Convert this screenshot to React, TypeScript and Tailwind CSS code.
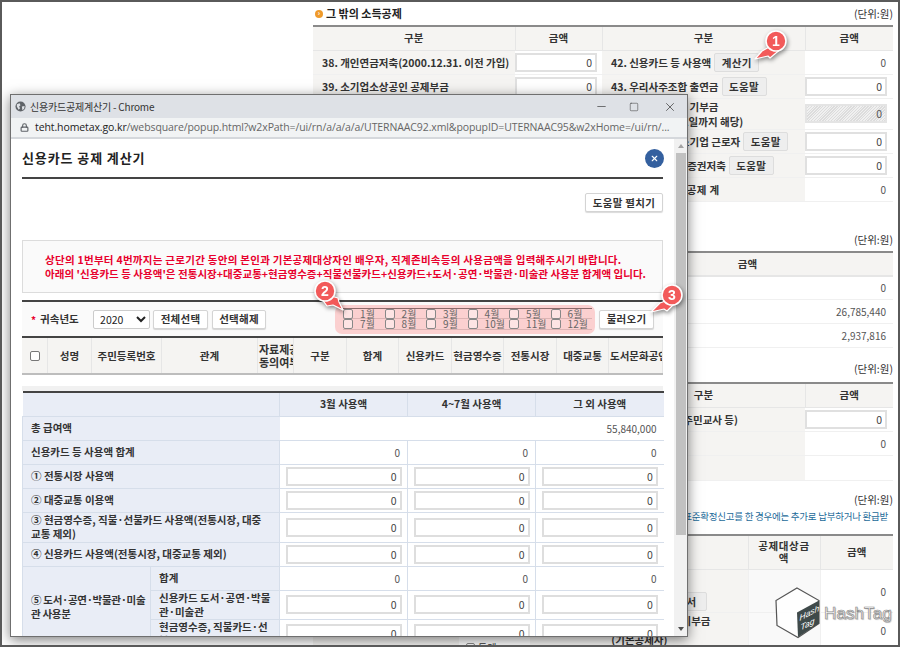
import { Lock, Minus, Square, X } from "lucide-react";

const font = "font-['Noto_Sans_CJK_KR','Noto_Sans',sans-serif]";

const months = ["1월", "2월", "3월", "4월", "5월", "6월", "7월", "8월", "9월", "10월", "11월", "12월"];
const heads = [
  { label: "성명", w: "w-[44px] justify-center" },
  { label: "주민등록번호", w: "w-[70px] justify-center" },
  { label: "관계", w: "w-[96px] justify-center" },
  { label: "자료제공\n동의여부", w: "w-[36px] justify-start pl-[1px] text-[11px]" },
  { label: "구분", w: "w-[53px] justify-center" },
  { label: "합계", w: "w-[52px] justify-center" },
  { label: "신용카드", w: "w-[53px] justify-center" },
  { label: "현금영수증", w: "w-[52px] justify-center" },
  { label: "전통시장", w: "w-[53px] justify-center" },
  { label: "대중교통", w: "w-[52px] justify-center" },
  { label: "도서문화공연", w: "w-[54px] justify-start pl-[1px]" },
];

function Btn({ children, className = "" }: { children: React.ReactNode; className?: string }) {
  return (
    <button className={`h-[19px] rounded-[2px] border border-[#d4d4d4] bg-white text-[10.5px] font-bold tracking-[0.3px] text-[#333] shadow-[0_1px_1px_rgba(0,0,0,0.15)] ${className}`}>
      {children}
    </button>
  );
}

function GrayBtn({ children, className = "" }: { children: React.ReactNode; className?: string }) {
  return (
    <button className={`h-[19px] shrink-0 rounded-[2px] border border-[#ddd] bg-[#eeeeee] text-[10.5px] font-bold tracking-[0.3px] text-[#333] ${className}`}>
      {children}
    </button>
  );
}

function Amount({ className = "w-[82px]" }: { className?: string }) {
  return (
    <input
      readOnly
      value="0"
      className={`h-[19px] border-2 border-[#e0e0e0] bg-white pr-[3px] text-right text-[10.5px] text-[#444] outline-none ${className}`}
    />
  );
}

function Unit({ className = "" }: { className?: string }) {
  return <div className={`flex justify-end text-[10.5px] leading-[14px] text-[#333] ${className}`}>(단위:원)</div>;
}

function BackHead({ children, className = "" }: { children?: React.ReactNode; className?: string }) {
  return (
    <th className={`border-r border-b border-[#e6e6e6] bg-[#f5f4f2] p-0 text-center text-[10.5px] font-bold text-[#333] ${className}`}>
      {children}
    </th>
  );
}

function Label({ children, className = "" }: { children?: React.ReactNode; className?: string }) {
  return (
    <td className={`border-b border-[#f0f0f0] bg-[#f5f4f2] p-0 pl-[9px] text-[10.5px] font-bold leading-[15px] text-[#333] ${className}`}>
      {children}
    </td>
  );
}

function Value({ children, className = "" }: { children?: React.ReactNode; className?: string }) {
  return (
    <td className={`border-b border-[#f0f0f0] p-0 pr-[7px] text-right text-[10px] text-[#555] ${className}`}>
      {children}
    </td>
  );
}

function Marker({ n, className, arrow }: { n: number; className: string; arrow: string }) {
  return (
    <svg viewBox="0 0 44 36" className={`absolute h-[36px] w-[44px] drop-shadow-[1px_2px_2px_rgba(0,0,0,0.45)] ${className}`}>
      <path d={arrow} fill="#f25a5a" stroke="#fff" strokeWidth="1.2" strokeLinejoin="round" />
      <circle cx="22" cy="11" r="10" fill="#f25a5a" stroke="#fff" strokeWidth="1.6" />
      <text x="22" y="16" textAnchor="middle" fontSize="14" fontWeight="700" fill="#fff" fontFamily="Liberation Sans, sans-serif">
        {n}
      </text>
    </svg>
  );
}

function Logo() {
  return (
    <div className="absolute left-[773px] top-[585px] flex items-center">
      <svg viewBox="0 0 46 52" className="h-[52px] w-[46px]">
        <path d="M22 1 44 13.5v23L23 50.5 2 38.5 1 13.5Z" fill="#fff" fillOpacity="0.85" stroke="#555" strokeWidth="1.2" />
        <path d="M22 25.5 44 13.5v23L23 50Z" fill="#3f4a4a" />
        <g transform="matrix(1 -0.52 0 1 24.5 34)" fill="#fff" fontSize="8.5" fontStyle="italic" fontFamily="Liberation Sans, sans-serif">
          <text x="0" y="0">Hash</text>
          <text x="1" y="10">Tag</text>
        </g>
      </svg>
      <span className="ml-[3px] font-['Liberation_Sans',sans-serif] text-[17px] leading-none tracking-[0.1px] text-white [-webkit-text-stroke:0.7px_#8a8a8a] [text-shadow:1px_1px_1px_rgba(0,0,0,0.25)]">
        HashTag
      </span>
    </div>
  );
}

function BackPage() {
  return (
    <div className="ml-[311px] w-[580px]">
      <div className="flex h-[23px] items-center justify-between pl-[2px]">
        <div className="flex items-center gap-[3px] text-[11px] font-bold text-[#222]">
          <span className="flex h-[8px] w-[8px] items-center justify-center rounded-full bg-[#ef9a2a] text-[7px] leading-none text-white">›</span>
          그 밖의 소득공제
        </div>
        <Unit />
      </div>
      <table className="w-[580px] table-fixed border-collapse border-t-2 border-[#8a8a8a]">
        <colgroup>
          <col className="w-[202px]" />
          <col className="w-[87px]" />
          <col className="w-[203px]" />
          <col className="w-[88px]" />
        </colgroup>
        <tbody>
          <tr className="h-[24px]">
            <BackHead>구분</BackHead>
            <BackHead>금액</BackHead>
            <BackHead>구분</BackHead>
            <BackHead className="border-r-0">금액</BackHead>
          </tr>
          <tr className="h-[24px]">
            <Label>38. 개인연금저축(2000.12.31. 이전 가입)</Label>
            <Value className="pr-[1px]"><Amount /></Value>
            <Label>
              <div className="flex items-center gap-[3px]">42. 신용카드 등 사용액<GrayBtn className="w-[45px]">계산기</GrayBtn></div>
            </Label>
            <Value>0</Value>
          </tr>
          <tr className="h-[24px]">
            <Label>39. 소기업소상공인 공제부금</Label>
            <Value className="pr-[1px]"><Amount /></Value>
            <Label>
              <div className="flex items-center gap-[3px]">43. 우리사주조합 출연금<GrayBtn className="w-[45px]">도움말</GrayBtn></div>
            </Label>
            <Value className="pr-[1px]"><Amount /></Value>
          </tr>
          <tr className="h-[30px]">
            <Label>40. 주택마련저축 소득공제</Label>
            <Value />
            <Label className="whitespace-nowrap">44. 우리사주조합 기부금<br />(2020년 12월 31일까지 해당)</Label>
            <Value className="pr-[1px]">
              <input readOnly value="0" className="h-[19px] w-[82px] border-2 border-[#e4e4e4] bg-[repeating-linear-gradient(135deg,#f0f0f0_0,#f0f0f0_1px,#dcdcdc_1px,#dcdcdc_2px)] pr-[3px] text-right text-[10.5px] text-[#555] outline-none" />
            </Value>
          </tr>
          <tr className="h-[24px]">
            <Label>41. 투자조합출자 등</Label>
            <Value />
            <Label>
              <div className="flex items-center gap-[3px]">45. 고용유지 중소기업 근로자<GrayBtn className="w-[45px]">도움말</GrayBtn></div>
            </Label>
            <Value className="pr-[1px]"><Amount /></Value>
          </tr>
          <tr className="h-[24px]">
            <Label />
            <Value />
            <Label>
              <div className="flex items-center gap-[3px]">46. 장기집합투자증권저축<GrayBtn className="w-[45px]">도움말</GrayBtn></div>
            </Label>
            <Value className="pr-[1px]"><Amount /></Value>
          </tr>
          <tr className="h-[24px]">
            <Label />
            <Value />
            <Label className="tracking-[0.4px]">47. 그 밖의 소득공제 계</Label>
            <Value>0</Value>
          </tr>
        </tbody>
      </table>

      <Unit className="mt-[31px] mb-[4px]" />
      <table className="w-[580px] table-fixed border-collapse border-t-2 border-[#8a8a8a]">
        <colgroup>
          <col className="w-[289px]" />
          <col className="w-[291px]" />
        </colgroup>
        <tbody>
          <tr className="h-[24px]">
            <BackHead className="border-r-0 border-b-2 border-[#ccc]">구분</BackHead>
            <BackHead className="border-r-0 border-b-2 border-[#ccc]">금액</BackHead>
          </tr>
          {["0", "26,785,440", "2,937,816"].map((v) => (
            <tr key={v} className="h-[24px]">
              <Value />
              <Value>{v}</Value>
            </tr>
          ))}
        </tbody>
      </table>

      <Unit className="mt-[14px] mb-[6px]" />
      <table className="w-[580px] table-fixed border-collapse border-t-2 border-[#8a8a8a]">
        <colgroup>
          <col className="w-[289px]" />
          <col className="w-[203px]" />
          <col className="w-[88px]" />
        </colgroup>
        <tbody>
          <tr className="h-[24px]">
            <BackHead>구분</BackHead>
            <BackHead>구분</BackHead>
            <BackHead className="border-r-0">금액</BackHead>
          </tr>
          <tr className="h-[24px]">
            <Label />
            <Label>
              <div className="flex justify-end pr-[67px]">(주민교사 등)</div>
            </Label>
            <Value className="pr-[1px]"><Amount /></Value>
          </tr>
          <tr className="h-[24px]">
            <Label />
            <Label />
            <Value>0</Value>
          </tr>
          <tr className="h-[25px]">
            <Label />
            <Label />
            <Value />
          </tr>
        </tbody>
      </table>

      <Unit className="mt-[12px]" />
      <div className="mt-[2px] mb-[11px] flex h-[14px] justify-end whitespace-nowrap pr-[5px] text-[9.5px] leading-[14px] tracking-[-0.25px] text-[#1b6a99]">
        표준확정신고를 한 경우에는 추가로 납부하거나 환급받
      </div>
      <table className="w-[580px] table-fixed border-collapse border-t-2 border-[#8a8a8a]">
        <colgroup>
          <col className="w-[146px]" />
          <col className="w-[71px]" />
          <col className="w-[218px]" />
          <col className="w-[72px]" />
          <col className="w-[73px]" />
        </colgroup>
        <tbody>
          <tr className="h-[35px]">
            <BackHead>구분</BackHead>
            <BackHead />
            <BackHead>구분</BackHead>
            <BackHead className="leading-[12px] tracking-[0.6px]">공제대상금<br />액</BackHead>
            <BackHead className="border-r-0">금액</BackHead>
          </tr>
          <tr className="h-[43px]">
            <Label />
            <Value />
            <Label>
              <div className="flex justify-end pr-[41px] pt-[20px]"><GrayBtn className="w-[50px]">증명서</GrayBtn></div>
            </Label>
            <Value className="border-l border-[#eee] bg-[#f9f9f9]" />
            <Value className="border-l border-[#eee]">0</Value>
          </tr>
          <tr className="h-[32px]">
            <Label />
            <td className="border-b border-[#f0f0f0] p-0 align-bottom">
              <label className="-mb-[7px] flex h-[14px] items-center gap-[3px] pl-[7px] text-[10px] text-[#333]">
                <input type="checkbox" className="h-[9px] w-[9px] appearance-none rounded-[2px] border border-[#888] bg-white" />
                통계
              </label>
            </td>
            <Label className="align-top">
              <div className="flex flex-col items-end">
                <span className="pr-[37px]">기부금</span>
                <span className="mt-[4px] whitespace-nowrap pr-[80px]">(기본공제자)</span>
              </div>
            </Label>
            <Value className="border-l border-[#eee] bg-[#f9f9f9]" />
            <Value className="border-l border-[#eee]">0</Value>
          </tr>
        </tbody>
      </table>
    </div>
  );
}

function Cell({ input }: { input?: boolean }) {
  return (
    <td className="border-b border-l border-[#d6deea] p-0 text-right text-[10px] text-[#555]">
      {input ? (
        <div className="flex justify-center">
          <input readOnly value="0" className="h-[19px] w-[116px] border-2 border-[#dedede] bg-white pr-[3px] text-right text-[10.5px] text-[#444] outline-none" />
        </div>
      ) : (
        <span className="pr-[7px]">0</span>
      )}
    </td>
  );
}

function Side({ children, colSpan = 2, rowSpan }: { children: React.ReactNode; colSpan?: number; rowSpan?: number }) {
  return (
    <th colSpan={colSpan} rowSpan={rowSpan} className="border-b border-l border-[#d6deea] bg-[#e9edf6] p-0 pl-[8px] text-left text-[10.5px] font-bold leading-[14px] text-[#333]">
      {children}
    </th>
  );
}

const usageRows: { label: React.ReactNode; input: boolean; h: string }[] = [
  { label: "신용카드 등 사용액 합계", input: false, h: "h-[24px]" },
  { label: "① 전통시장 사용액", input: true, h: "h-[24px]" },
  { label: "② 대중교통 이용액", input: true, h: "h-[24px]" },
  { label: <>③ 현금영수증, 직불·선불카드 사용액(전통시장, 대중<br />교통 제외)</>, input: true, h: "h-[30px]" },
  { label: "④ 신용카드 사용액(전통시장, 대중교통 제외)", input: true, h: "h-[24px]" },
];

function Popup() {
  return (
    <div className="absolute left-[8px] top-[92px] flex h-[543px] w-[678px] flex-col overflow-hidden border border-[#6f6f6f] bg-white shadow-[0_3px_12px_rgba(0,0,0,0.5)]">
      <div className="flex h-[23px] shrink-0 items-center bg-[#dee1e6] pl-[4px]">
        <svg viewBox="0 0 12 12" className="h-[11px] w-[11px] shrink-0">
          <circle cx="6" cy="6" r="5.5" fill="#5f6368" />
          <path d="M2 3.5 5 2.5 6 4.5 4.5 6 5.5 8 4 9.5 2 6Z M7.5 6 10.5 5.5 10 8.5 8 10Z" fill="#dee1e6" />
        </svg>
        <span className="ml-[4px] text-[10px] tracking-[-0.2px] text-[#333]">신용카드공제계산기 - Chrome</span>
        <div className="ml-auto flex items-center text-[#333]">
          <Minus size={13} strokeWidth={1.2} className="mr-[21px]" />
          <Square size={10} strokeWidth={1.2} className="mr-[24px]" />
          <X size={14} strokeWidth={1.2} className="mr-[10px]" />
        </div>
      </div>
      <div className="flex h-[21px] shrink-0 items-center border-b-2 border-[#d5d8dc] bg-[#f1f3f4] pl-[9px]">
        <Lock size={9} strokeWidth={3} className="shrink-0 text-[#5f6368]" />
        <span className="ml-[6px] whitespace-nowrap font-['Open_Sans',sans-serif] text-[10.5px] tracking-[-0.1px] text-[#666]">
          <span className="text-[#222]">teht.hometax.go.kr</span>/websquare/popup.html?w2xPath=/ui/rn/a/a/a/a/UTERNAAC92.xml&popupID=UTERNAAC95&w2xHome=/ui/rn/...
        </span>
      </div>

      <div className="flex min-h-0 flex-1">
        <div className="w-[663px] overflow-hidden px-[11px]">
          <div className="flex h-[38px] items-center justify-between">
            <h1 className="text-[13px] font-bold tracking-[0.9px] text-[#222]">신용카드 공제 계산기</h1>
            <span className="mr-[-1px] flex h-[19px] w-[19px] items-center justify-center rounded-full bg-[#34609f] text-white">
              <X size={9} strokeWidth={3} />
            </span>
          </div>
          <div className="h-[2px] bg-[#444]" />
          <div className="mt-[14px] flex justify-end">
            <Btn className="w-[78px]">도움말 펼치기</Btn>
          </div>

          <div className="mt-[28px] flex h-[53px] flex-col items-start justify-center border border-[#dcdcdc] bg-[#fafafa] pl-[22px] text-[10.5px] font-bold leading-[14px] text-[#e8002d]">
            <p className="tracking-[0.28px]">상단의 1번부터 4번까지는 근로기간 동안의 본인과 기본공제대상자인 배우자, 직계존비속등의 사용금액을 입력해주시기 바랍니다.</p>
            <p className="tracking-[0.04px]">아래의 '신용카드 등 사용액'은 전통시장+대중교통+현금영수증+직불선불카드+신용카드+도서·공연·박물관·미술관 사용분 합계액 입니다.</p>
          </div>

          <div className="mt-[7px] flex h-[38px] items-center border-y-2 border-[#444] bg-[#fafafa]">
            <span className="ml-[9px] text-[10px] font-bold text-[#e8002d]">*</span>
            <span className="ml-[4px] w-[53px] text-[10.5px] font-bold text-[#333]">귀속년도</span>
            <select className="h-[19px] w-[57px] rounded-[2px] border border-[#ccc] bg-white pl-[2px] text-[10.5px] text-[#222]">
              <option>2020</option>
            </select>
            <Btn className="ml-[3px] w-[55px]">전체선택</Btn>
            <Btn className="ml-[4px] w-[54px]">선택해제</Btn>
            <div className="ml-[69px] grid h-[29px] w-[260px] grid-cols-6 content-center rounded-[7px] bg-[#fbd0d0] pl-[8px] pr-[3px]">
              {months.map((m, i) => (
                <label key={m} className={`flex h-[11px] items-center border-b border-[#dcb4b4] text-[10px] leading-none text-[#666] ${i < 6 ? "border-t border-t-[#8a6b6b]" : ""}`}>
                  <input type="checkbox" className="h-[10px] w-[10px] appearance-none rounded-[2px] border border-[#888] bg-[#fde4e4]" />
                  <span className="ml-[7px]">{m}</span>
                </label>
              ))}
            </div>
            <Btn className="ml-[4px] w-[55px]">불러오기</Btn>
          </div>

          <div className="flex h-[37px] overflow-hidden border-b-2 border-[#bdbdbd] bg-[#f5f4f2] text-[10.5px] font-bold leading-[13px] text-[#333]">
            <div className="flex w-[26px] shrink-0 items-center justify-center border-r border-[#e6e6e6]">
              <input type="checkbox" className="h-[10px] w-[10px] appearance-none rounded-[2px] border border-[#777] bg-white" />
            </div>
            {heads.map((h) => (
              <div key={h.label} className={`flex shrink-0 items-center overflow-hidden whitespace-pre border-r border-[#e6e6e6] ${h.w}`}>
                {h.label}
              </div>
            ))}
          </div>

          <div className="mt-[11px] h-[5px] bg-[#f1f1f1]" />
          <table className="w-[641px] table-fixed border-collapse border-t-2 border-[#444]">
            <colgroup>
              <col className="w-[128px]" />
              <col className="w-[129px]" />
              <col className="w-[128px]" />
              <col className="w-[128px]" />
              <col className="w-[128px]" />
            </colgroup>
            <tbody>
              <tr className="h-[24px]">
                <th colSpan={2} className="border-b border-[#d6deea] bg-[#e9edf6] p-0" />
                {["3월 사용액", "4~7월 사용액", "그 외 사용액"].map((t) => (
                  <th key={t} className="border-b border-l border-[#d6deea] bg-[#e9edf6] p-0 text-center text-[10.5px] font-bold text-[#333]">
                    {t}
                  </th>
                ))}
              </tr>
              <tr className="h-[24px]">
                <Side>총 급여액</Side>
                <td colSpan={3} className="border-b border-[#d6deea] p-0 pr-[7px] text-right text-[10px] text-[#555]">55,840,000</td>
              </tr>
              {usageRows.map((r, i) => (
                <tr key={i} className={r.h}>
                  <Side>{r.label}</Side>
                  <Cell input={r.input} />
                  <Cell input={r.input} />
                  <Cell input={r.input} />
                </tr>
              ))}
              <tr className="h-[24px]">
                <Side colSpan={1} rowSpan={3}>
                  <span className="whitespace-nowrap tracking-[-0.3px]">⑤ 도서·공연·박물관·미술<br />관 사용분</span>
                </Side>
                <Side colSpan={1}>합계</Side>
                <Cell />
                <Cell />
                <Cell />
              </tr>
              <tr className="h-[29px]">
                <Side colSpan={1}>신용카드 도서·공연·박물<br />관·미술관</Side>
                <Cell input />
                <Cell input />
                <Cell input />
              </tr>
              <tr className="h-[29px]">
                <Side colSpan={1}>현금영수증, 직불카드·선<br />불카드</Side>
                <Cell input />
                <Cell input />
                <Cell input />
              </tr>
            </tbody>
          </table>
        </div>
        <div className="flex w-[13px] shrink-0 flex-col items-center bg-[#f1f1f1]">
          <span className="mt-[5px] h-0 w-0 border-x-[3px] border-b-[4px] border-x-transparent border-b-[#a3a3a3]" />
          <div className="mt-[5px] h-[382px] w-[10px] bg-[#c1c1c1]" />
          <span className="mt-auto mb-[5px] h-0 w-0 border-x-[3px] border-t-[4px] border-x-transparent border-t-[#505050]" />
        </div>
      </div>
    </div>
  );
}

export default function App() {
  return (
    <div className={`relative h-[647px] w-[900px] overflow-hidden border-2 border-[#5a5a5a] bg-white ${font}`}>
      <BackPage />
      <Popup />
      <Marker n={1} className="left-[752px] top-[28px]" arrow="M17 16 8 21 1 29 14 26 16 28 28 18Z" />
      <Marker n={2} className="left-[301px] top-[278px]" arrow="M18 18 24 26 30 25 40 30 36 22 35 18 28 16Z" />
      <Marker n={3} className="left-[648px] top-[282px]" arrow="M18 16 10 19 1 28 14 25 17 27 27 17Z" />
      <Logo />
    </div>
  );
}
